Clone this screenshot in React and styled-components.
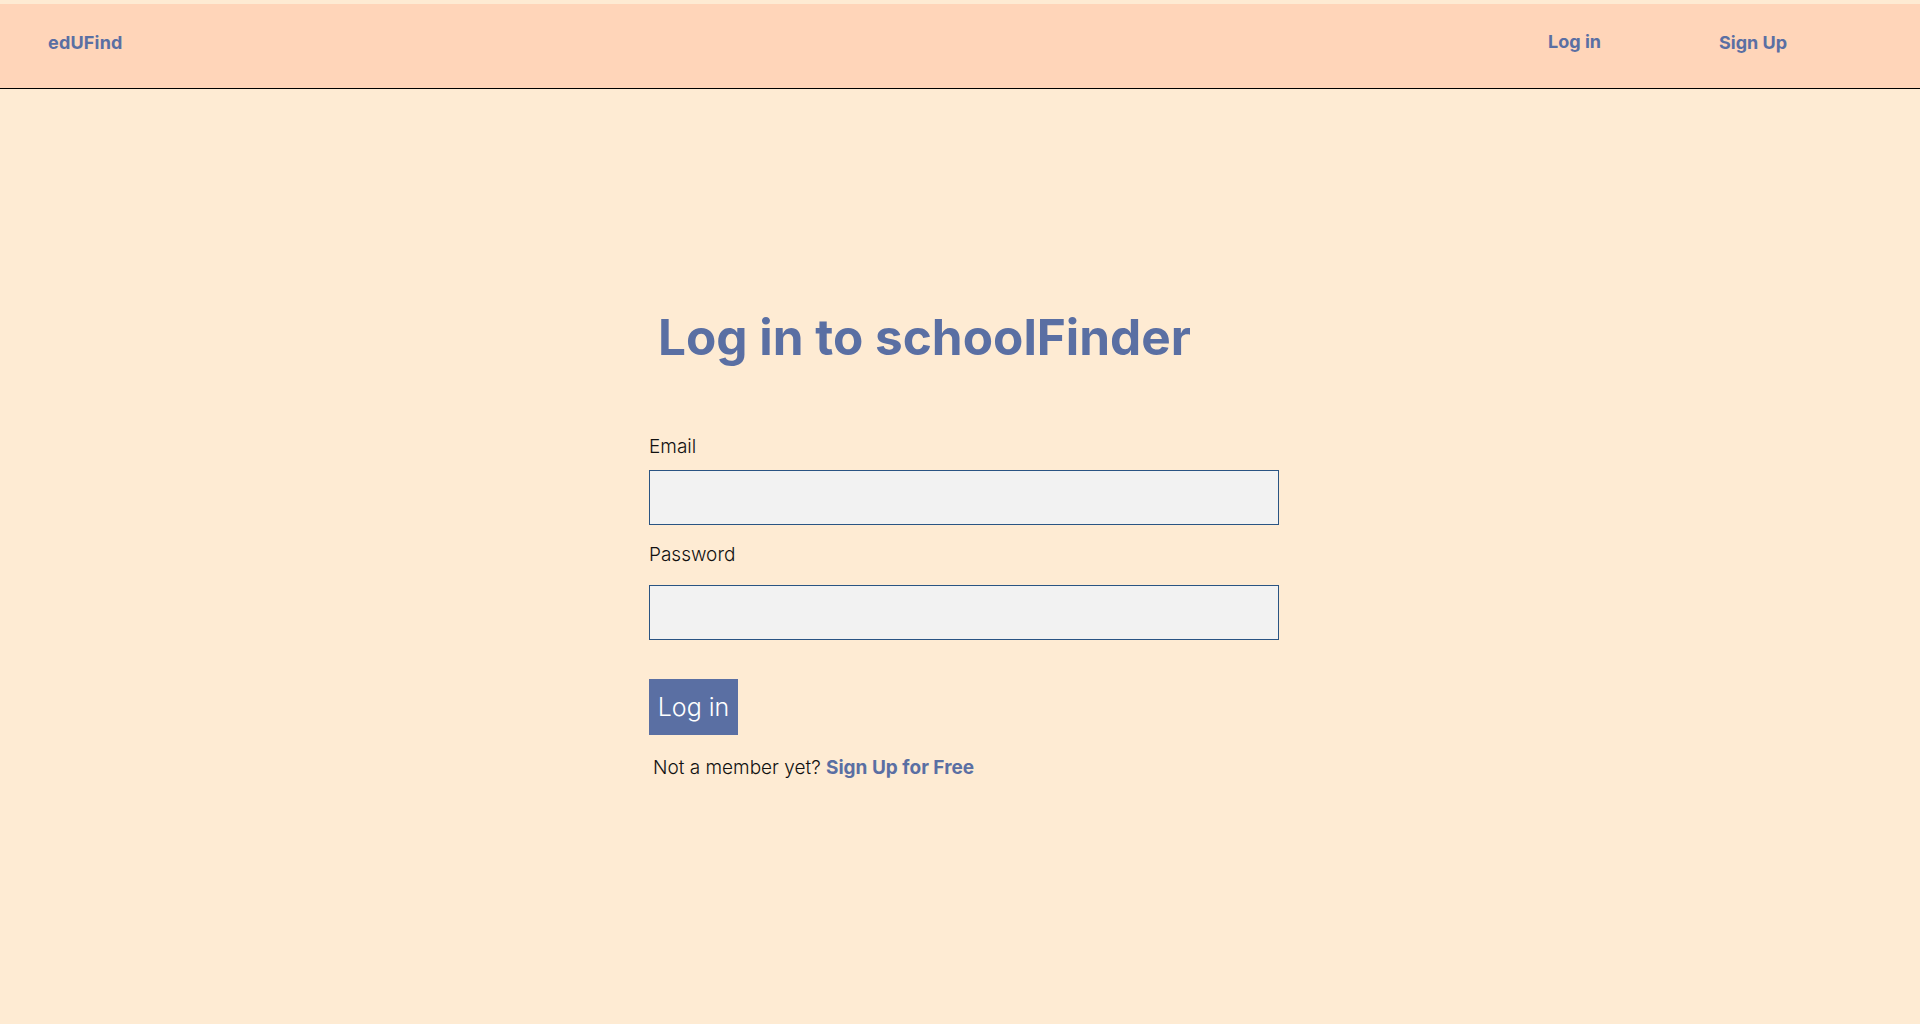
import React from "react";
import styled, { createGlobalStyle } from "styled-components";

const GlobalStyle = createGlobalStyle`
  html, body {
    margin: 0;
    padding: 0;
    background-color: #feebd3;
    font-family: "Inter", "Open Sans", sans-serif;
  }
  * {
    box-sizing: border-box;
  }
`;

const Header = styled.header`
  margin-top: 4px;
  height: 85px;
  display: flex;
  align-items: center;
  justify-content: space-between;
  padding: 0 133px 8px 48px;
  background-color: #ffd5b9;
  border-bottom: 1px solid #000;
`;

const Logo = styled.a`
  font-size: 18px;
  font-weight: 700;
  color: #5a6fa3;
  text-decoration: none;
  letter-spacing: 0.2px;
`;

const Nav = styled.nav`
  display: flex;
  align-items: center;
  gap: 118px;
`;

const NavLink = styled.a`
  font-size: 18px;
  font-weight: 700;
  color: #5a6fa3;
  text-decoration: none;
  position: relative;
  top: ${(props) => props.offset || 0}px;
`;

const Main = styled.main`
  min-height: 935px;
  padding-top: 218px;
  margin-left: 649px;
  width: 630px;
`;

const Title = styled.h1`
  margin: 0 0 68px 9px;
  font-size: 49.5px;
  line-height: 60px;
  font-weight: 700;
  color: #5a6fa3;
  white-space: nowrap;
`;

const Form = styled.form`
  display: flex;
  flex-direction: column;
`;

const Label = styled.label`
  font-size: 19px;
  line-height: 24px;
  font-weight: 300;
  color: #111;
  margin-bottom: ${(props) => props.gap}px;
`;

const Input = styled.input`
  width: 630px;
  height: 55px;
  border: 1px solid #2a5483;
  background-color: #f2f2f2;
  font-size: 18px;
  padding: 0 12px;
  margin-bottom: ${(props) => props.gap}px;
  outline: none;
`;

const Button = styled.button`
  width: 89px;
  height: 56px;
  border: none;
  background-color: #5a6fa3;
  color: #fff;
  font-family: inherit;
  font-size: 25px;
  font-weight: 300;
  cursor: pointer;
  padding: 0;
`;

const Footer = styled.p`
  margin: 21px 0 0 4px;
  font-size: 19px;
  line-height: 24px;
  font-weight: 300;
  color: #111;
`;

const SignUpLink = styled.a`
  font-weight: 700;
  color: #5a6fa3;
  text-decoration: none;
`;

const App = () => {
  return (
    <>
      <GlobalStyle />
      <Header>
        <Logo href="#">edUFind</Logo>
        <Nav>
          <NavLink href="#" offset={-1}>Log in</NavLink>
          <NavLink href="#">Sign Up</NavLink>
        </Nav>
      </Header>
      <Main>
        <Title>Log in to schoolFinder</Title>
        <Form onSubmit={(e) => e.preventDefault()}>
          <Label htmlFor="email" gap={11}>Email</Label>
          <Input id="email" type="email" gap={18} />
          <Label htmlFor="password" gap={18}>Password</Label>
          <Input id="password" type="password" gap={39} />
          <div>
            <Button type="submit">Log in</Button>
          </div>
        </Form>
        <Footer>
          Not a member yet? <SignUpLink href="#">Sign Up for Free</SignUpLink>
        </Footer>
      </Main>
    </>
  );
};

export default App;
